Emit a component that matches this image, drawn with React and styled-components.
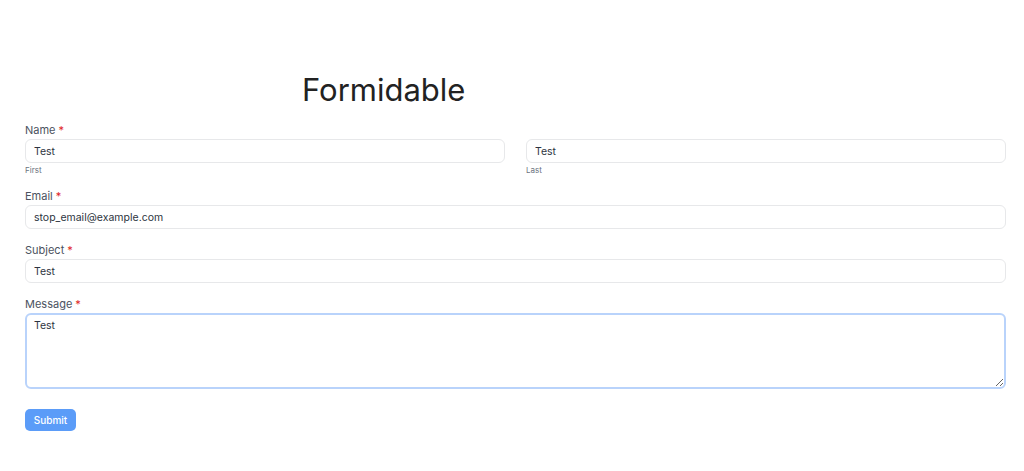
import React from "react";
import styled, { createGlobalStyle } from "styled-components";

const Global = createGlobalStyle`
  html, body { margin: 0; padding: 0; background: #fff; }
  body { font-family: Inter, "Noto Sans", sans-serif; color: #1f2937; }
  * { box-sizing: border-box; }
`;

const Page = styled.div`
  padding: 70px 18px 0 25px;
  width: 1024px;
`;

const Title = styled.h1`
  margin: 0 0 13px 0;
  padding-left: 277px;
  font-size: 31px;
  font-weight: 400;
  line-height: 40px;
  color: #222;
`;

const Form = styled.form`
  display: flex;
  flex-direction: column;
`;

const Field = styled.div`
  display: flex;
  flex-direction: column;
  margin-bottom: ${(p) => p.$mb ?? 14}px;
`;

const Label = styled.label`
  font-size: 11px;
  line-height: 14px;
  color: #4b5260;
  margin-bottom: 2px;
`;

const Req = styled.span`
  color: #e02424;
  margin-left: 3px;
`;

const Row = styled.div`
  display: grid;
  grid-template-columns: 1fr 1fr;
  column-gap: 21px;
`;

const Sub = styled.div`
  display: flex;
  flex-direction: column;
`;

const Input = styled.input`
  height: 24px;
  width: 100%;
  border: 1px solid #e7e8ea;
  border-radius: 6px;
  padding: 0 8px;
  font-family: inherit;
  font-size: 10.5px;
  color: #2d3440;
  outline: none;
  background: #fff;
`;

const Hint = styled.span`
  font-size: 8px;
  color: #6b7280;
  margin-top: 2px;
  line-height: 10px;
`;

const TextArea = styled.textarea`
  height: 76px;
  width: 100%;
  border: 2px solid #b9d3fb;
  border-radius: 6px;
  padding: 2px 7px;
  font-family: inherit;
  font-size: 10.5px;
  color: #2d3440;
  outline: none;
  resize: vertical;
  line-height: 18px;
`;

const Button = styled.button`
  margin-top: 20px;
  align-self: flex-start;
  width: 51px;
  height: 22px;
  border: none;
  border-radius: 5px;
  background: #5b9cf8;
  color: #fff;
  font-family: inherit;
  font-size: 10px;
  font-weight: 500;
  padding: 0;
`;

export default function App() {
  return (
    <>
      <Global />
      <Page>
        <Title>Formidable</Title>
        <Form onSubmit={(e) => e.preventDefault()}>
          <Field $mb={14}>
            <Label>Name<Req>*</Req></Label>
            <Row>
              <Sub>
                <Input defaultValue="Test" />
                <Hint>First</Hint>
              </Sub>
              <Sub>
                <Input defaultValue="Test" />
                <Hint>Last</Hint>
              </Sub>
            </Row>
          </Field>
          <Field>
            <Label>Email<Req>*</Req></Label>
            <Input defaultValue="stop_email@example.com" />
          </Field>
          <Field>
            <Label>Subject<Req>*</Req></Label>
            <Input defaultValue="Test" />
          </Field>
          <Field $mb={0}>
            <Label>Message<Req>*</Req></Label>
            <TextArea defaultValue="Test" />
          </Field>
          <Button type="submit">Submit</Button>
        </Form>
      </Page>
    </>
  );
}
